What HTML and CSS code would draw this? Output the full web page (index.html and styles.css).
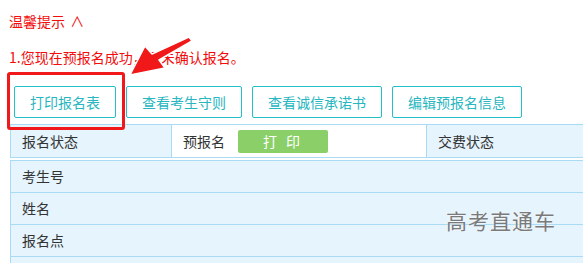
FILE: index.html
```html
<!DOCTYPE html>
<html lang="zh-CN">
<head>
    <meta charset="UTF-8">
    <meta name="viewport" content="width=device-width, initial-scale=1.0">
    <title>预报名信息</title>
    <link rel="stylesheet" href="styles.css">
</head>
<body>
    <div class="page">
        <div class="tips">
            <div class="tip-title">温馨提示 <span class="caret">∧</span></div>
            <div class="tip-line">1.您现在预报名成功，还未确认报名。</div>
        </div>

        <div class="btns">
            <button class="btn">打印报名表</button>
            <button class="btn">查看考生守则</button>
            <button class="btn">查看诚信承诺书</button>
            <button class="btn">编辑预报名信息</button>
        </div>

        <div class="status">
            <div class="cell label">报名状态</div>
            <div class="cell value">
                预报名
                <span class="print">打 印</span>
            </div>
            <div class="cell label">交费状态</div>
        </div>

        <div class="info">
            <div class="row">考生号</div>
            <div class="row">姓名</div>
            <div class="row">报名点</div>
            <div class="row"></div>
        </div>

        <div class="mark-box"></div>
        <svg class="arrow" width="80" height="50" viewBox="0 0 80 50">
            <polygon points="61,1 64,5 31,24 37,32 2,39 17,10 24,18" fill="#f01818" stroke="#fff" stroke-width="1.5" stroke-linejoin="round"/>
        </svg>
        <div class="watermark">高考直通车</div>
    </div>
</body>
</html>
```

FILE: styles.css
```css
body {
    margin: 0;
    padding: 0;
    background-color: #fff;
    font-family: "Noto Sans CJK SC", "Liberation Sans", sans-serif;
    font-size: 14px;
    color: #333;
}

.page {
    position: relative;
    width: 583px;
    height: 263px;
    overflow: hidden;
}

.tips {
    padding: 11px 0 0 9px;
    color: #f20c0c;
}

.tip-title,
.tip-line {
    height: 20px;
    line-height: 20px;
}

.tip-line {
    margin-top: 16px;
}

.caret {
    font-size: 14px;
    margin-left: 2px;
}

.btns {
    display: flex;
    gap: 10px;
    margin-top: 19px;
    padding-left: 14px;
}

.btn {
    height: 32px;
    padding: 0 15px;
    border: 1px solid #22c0c8;
    border-radius: 2px;
    background-color: #fff;
    color: #28b6c0;
    font-family: inherit;
    font-size: 14px;
}

.status {
    display: flex;
    width: 700px;
    height: 32px;
    margin: 6px 0 0 10px;
    border: 1px solid #a9dbf5;
    border-right: none;
}

.cell {
    display: flex;
    align-items: center;
    padding-left: 11px;
    line-height: 20px;
}

.label {
    background-color: #e5f4fd;
}

.status .cell:first-child {
    width: 149px;
    border-right: 1px solid #a9dbf5;
}

.value {
    width: 243px;
    background-color: #fff;
    border-right: 1px solid #a9dbf5;
}

.status .cell:last-child {
    flex: 1;
}

.print {
    display: inline-block;
    width: 90px;
    height: 23px;
    line-height: 23px;
    margin-left: 13px;
    border-radius: 2px;
    background-color: #8bcf68;
    color: #fff;
    text-align: center;
    letter-spacing: 3px;
}

.info {
    width: 700px;
    margin: 2px 0 0 10px;
    border-top: 1px solid #a9dbf5;
    border-left: 1px solid #a9dbf5;
    background-color: #e5f4fd;
}

.row {
    height: 31px;
    line-height: 31px;
    padding-left: 11px;
    border-bottom: 1px solid #a9dbf5;
}

.mark-box {
    position: absolute;
    left: 7px;
    top: 72px;
    width: 112px;
    height: 52px;
    border: 3px solid #f01818;
    border-radius: 3px;
}

.arrow {
    position: absolute;
    left: 128px;
    top: 36px;
}

.watermark {
    position: absolute;
    left: 446px;
    top: 205px;
    font-size: 21px;
    letter-spacing: 1px;
    color: #7a7a7a;
    text-shadow: 0 0 2px #fff;
}
```
